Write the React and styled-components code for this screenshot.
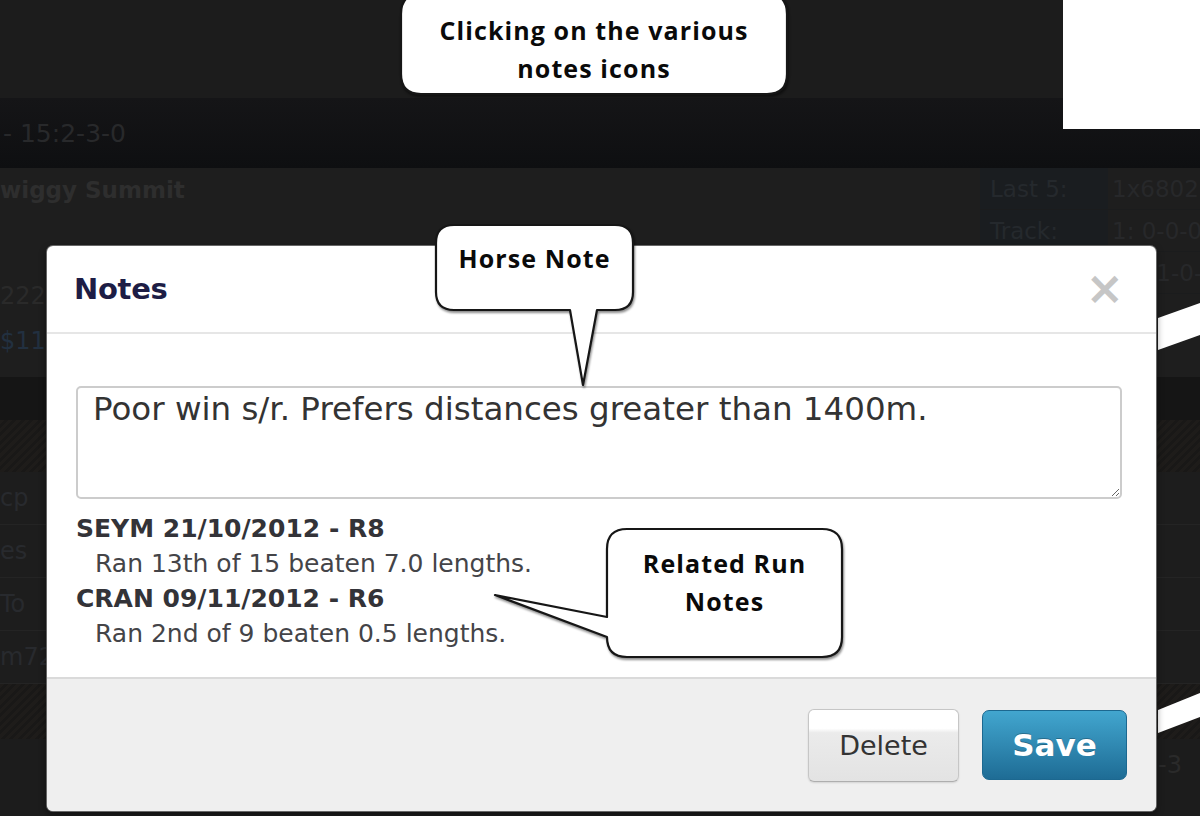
import React from 'react';
import styled, { createGlobalStyle } from 'styled-components';

const Global = createGlobalStyle`
  html, body { margin: 0; padding: 0; background: #1d1d1d; }
  body { font-family: "DejaVu Sans", Verdana, sans-serif; }
  * { box-sizing: border-box; }
`;

const Page = styled.div`
  position: relative;
  width: 1200px;
  height: 816px;
  overflow: hidden;
  background: #1e1e1e;
  display: flex;
  flex-direction: column;
  font-family: "DejaVu Sans", Verdana, sans-serif;
`;

const TopNav = styled.div`
  height: 98px;
  flex: none;
  background: #1c1c1c;
`;

const RaceBar = styled.div`
  height: 70px;
  flex: none;
  background: linear-gradient(#151517, #0e0f11);
  display: flex;
  align-items: center;
  padding-left: 3px;
  font-size: 25px;
  color: #28292b;
`;

const HorseSection = styled.div`
  height: 209px;
  flex: none;
  display: flex;
  background: #1e1e1e;
`;

const HorseInfo = styled.div`
  flex: 1;
  display: flex;
  flex-direction: column;
  padding-top: 7px;
`;

const HorseName = styled.div`
  font-weight: bold;
  font-size: 23px;
  line-height: 30px;
  color: #2e2e2e;
`;

const InfoBlock = styled.div`
  margin-top: 69px;
`;

const InfoLine = styled.div`
  font-size: 24px;
  line-height: 45px;
  color: ${p => (p.$blue ? '#223040' : '#2a2a2a')};
`;

const StatsTable = styled.div`
  width: 220px;
  flex: none;
  display: flex;
  flex-direction: column;
`;

const StatRow = styled.div`
  height: 42px;
  display: flex;
  border-bottom: 1px solid #1b1c1d;
`;

const StatLabel = styled.div`
  width: 128px;
  background: #1a1d20;
  padding-left: 10px;
  display: flex;
  align-items: center;
  font-size: 23px;
  color: #25292d;
`;

const StatValue = styled.div`
  flex: 1;
  padding-left: 4px;
  display: flex;
  align-items: center;
  font-size: 23px;
  color: #27282a;
  white-space: nowrap;
  overflow: hidden;
`;

const DarkBand = styled.div`
  height: 43px;
  flex: none;
  background: #151515;
`;

const Hatch = styled.div`
  height: ${p => p.$h}px;
  flex: none;
  background: repeating-linear-gradient(135deg, #1e1c1a 0 3px, #191817 3px 6px);
`;

const GridRow = styled.div`
  height: 53px;
  flex: none;
  display: flex;
  align-items: center;
  justify-content: space-between;
  border-bottom: 1px solid #242424;
  background: #1d1d1d;
  font-size: 24px;
  color: #282a2e;
`;

const RowTail = styled.div`
  width: 42px;
  font-size: 24px;
  color: #2a2a2a;
`;

const BottomRow = styled.div`
  flex: 1;
  display: flex;
  align-items: flex-start;
  justify-content: flex-end;
  padding-top: 12px;
  background: #1c1c1c;
`;

const WhiteCorner = styled.div`
  position: absolute;
  left: 1063px;
  top: 0;
  width: 137px;
  height: 129px;
  background: #ffffff;
`;

const Stripes = styled.svg`
  position: absolute;
  left: 1158px;
  top: 290px;
  width: 42px;
  height: 460px;
`;

/* ---------- Modal ---------- */

const Modal = styled.div`
  position: absolute;
  left: 46px;
  top: 245px;
  width: 1111px;
  height: 567px;
  background: #ffffff;
  border: 1px solid rgba(0, 0, 0, 0.6);
  border-radius: 7px;
  box-shadow: 0 3px 7px rgba(0, 0, 0, 0.4);
  overflow: hidden;
  display: flex;
  flex-direction: column;
`;

const ModalHeader = styled.div`
  height: 88px;
  flex: none;
  display: flex;
  align-items: center;
  justify-content: space-between;
  padding: 0 32px 0 27px;
  border-bottom: 2px solid #e6e6e6;
`;

const Title = styled.h3`
  margin: 0;
  font-size: 29px;
  font-weight: bold;
  color: #1d1d45;
  letter-spacing: -0.3px;
`;

const Close = styled.span`
  font-size: 46px;
  font-weight: bold;
  line-height: 1;
  color: #c6c6c6;
  margin-top: -2px;
`;

const ModalBody = styled.div`
  flex: 1;
  padding: 52px 34px 0 29px;
`;

const NoteArea = styled.textarea`
  display: block;
  width: 100%;
  height: 113px;
  margin: 0;
  border: 2px solid #cccccc;
  border-radius: 5px;
  padding: 1px 15px;
  font-family: "DejaVu Sans", Verdana, sans-serif;
  font-size: 32.5px;
  line-height: 40px;
  color: #333;
  background: #fff;
  outline: none;
  resize: vertical;
`;

const RunList = styled.div`
  margin-top: 12px;
  font-size: 25px;
  line-height: 35px;
`;

const RunHeading = styled.div`
  font-weight: bold;
  color: #333338;
`;

const RunText = styled.div`
  padding-left: 19px;
  color: #444448;
`;

const ModalFooter = styled.div`
  height: 134px;
  flex: none;
  display: flex;
  justify-content: flex-end;
  align-items: center;
  gap: 23px;
  padding-right: 29px;
  background: #efefef;
  border-top: 2px solid #dadada;
`;

const DeleteButton = styled.button`
  width: 151px;
  height: 73px;
  border: 1px solid #c6c6c6;
  border-bottom-color: #aeaeae;
  border-radius: 6px;
  background: linear-gradient(#ffffff 0%, #ffffff 26%, #ebebeb 32%, #e3e3e3 100%);
  box-shadow: 0 1px 2px rgba(0, 0, 0, 0.12);
  font-family: "DejaVu Sans", Verdana, sans-serif;
  font-size: 27px;
  color: #333;
  padding: 0;
`;

const SaveButton = styled.button`
  width: 145px;
  height: 70px;
  border: 1px solid #1c6890;
  border-radius: 7px;
  background: linear-gradient(#42a6cf, #1e6c95);
  font-family: "DejaVu Sans", Verdana, sans-serif;
  font-size: 31px;
  font-weight: bold;
  color: #ffffff;
  text-shadow: 0 -1px 0 rgba(0, 0, 0, 0.25);
  padding: 0;
`;

/* ---------- Callouts ---------- */

const CalloutWrap = styled.div`
  position: absolute;
  left: ${p => p.$x}px;
  top: ${p => p.$y}px;
  width: ${p => p.$w}px;
  height: ${p => p.$h}px;
  pointer-events: none;
`;

const CalloutShape = styled.svg`
  position: absolute;
  left: 0;
  top: 0;
  width: 100%;
  height: 100%;
  overflow: visible;
  filter: drop-shadow(1px 2px 1px rgba(0, 0, 0, 0.45));
`;

const CalloutText = styled.div`
  position: absolute;
  left: ${p => p.$l}px;
  top: ${p => p.$t}px;
  width: ${p => p.$w}px;
  text-align: center;
  font-family: "Open Sans", Lato, sans-serif;
  font-weight: 700;
  font-size: 25px;
  line-height: 38px;
  letter-spacing: 1.1px;
  color: #0a0a0a;
`;

function Callout({ x, y, w, h, path, text, textBox }) {
  return (
    <CalloutWrap $x={x} $y={y} $w={w} $h={h}>
      <CalloutShape viewBox={`0 0 ${w} ${h}`}>
        <path d={path} fill="#ffffff" stroke="#161616" strokeWidth="2.2" strokeLinejoin="round" />
      </CalloutShape>
      <CalloutText $l={textBox.l} $t={textBox.t} $w={textBox.w}>
        {text.map(line => (
          <div key={line}>{line}</div>
        ))}
      </CalloutText>
    </CalloutWrap>
  );
}

const stats = [
  ['Last 5:', '1x6802'],
  ['Track:', '1: 0-0-0'],
  ['Dist:', '10: 1-0-0'],
];

const rows = ['cp', 'es', 'To', 'm72'];

const runs = [
  { head: 'SEYM 21/10/2012 - R8', text: 'Ran 13th of 15 beaten 7.0 lengths.' },
  { head: 'CRAN 09/11/2012 - R6', text: 'Ran 2nd of 9 beaten 0.5 lengths.' },
];

export default function App() {
  return (
    <>
      <Global />
      <Page>
        <TopNav />
        <RaceBar>- 15:2-3-0</RaceBar>
        <HorseSection>
          <HorseInfo>
            <HorseName>wiggy Summit</HorseName>
            <InfoBlock>
              <InfoLine>2220</InfoLine>
              <InfoLine $blue>$11</InfoLine>
            </InfoBlock>
          </HorseInfo>
          <StatsTable>
            {stats.map(([l, v]) => (
              <StatRow key={l}>
                <StatLabel>{l}</StatLabel>
                <StatValue>{v}</StatValue>
              </StatRow>
            ))}
          </StatsTable>
        </HorseSection>
        <DarkBand />
        <Hatch $h={52} />
        {rows.map(r => (
          <GridRow key={r}>
            <span>{r}</span>
            <RowTail />
          </GridRow>
        ))}
        <Hatch $h={55} />
        <BottomRow>
          <RowTail>-3</RowTail>
        </BottomRow>

        <WhiteCorner />
        <Stripes viewBox="0 0 42 460">
          <polygon points="0,28 42,13 42,45 0,60" fill="#ffffff" />
          <polygon points="0,420 42,403 42,427 0,443" fill="#ffffff" />
        </Stripes>

        <Modal>
          <ModalHeader>
            <Title>Notes</Title>
            <Close>×</Close>
          </ModalHeader>
          <ModalBody>
            <NoteArea readOnly defaultValue="Poor win s/r. Prefers distances greater than 1400m." />
            <RunList>
              {runs.map(r => (
                <React.Fragment key={r.head}>
                  <RunHeading>{r.head}</RunHeading>
                  <RunText>{r.text}</RunText>
                </React.Fragment>
              ))}
            </RunList>
          </ModalBody>
          <ModalFooter>
            <DeleteButton>Delete</DeleteButton>
            <SaveButton>Save</SaveButton>
          </ModalFooter>
        </Modal>

        <Callout
          x={399}
          y={-8}
          w={392}
          h={106}
          path="M22 2 H368 Q388 2 388 22 V82 Q388 102 368 102 H22 Q2 102 2 82 V22 Q2 2 22 2 Z"
          text={['Clicking on the various', 'notes icons']}
          textBox={{ l: 2, t: 19, w: 386 }}
        />
        <Callout
          x={430}
          y={220}
          w={210}
          h={170}
          path="M24 5 H185 Q203 5 203 23 V72 Q203 90 185 90 H167 L153 165 L140 90 H24 Q6 90 6 72 V23 Q6 5 24 5 Z"
          text={['Horse Note']}
          textBox={{ l: 6, t: 19, w: 197 }}
        />
        <Callout
          x={490}
          y={522}
          w={360}
          h={142}
          path="M137 7 H332 Q352 7 352 27 V115 Q352 135 332 135 H137 Q117 135 117 115 L5 73 L117 95 V27 Q117 7 137 7 Z"
          text={['Related Run', 'Notes']}
          textBox={{ l: 117, t: 22, w: 235 }}
        />
      </Page>
    </>
  );
}
